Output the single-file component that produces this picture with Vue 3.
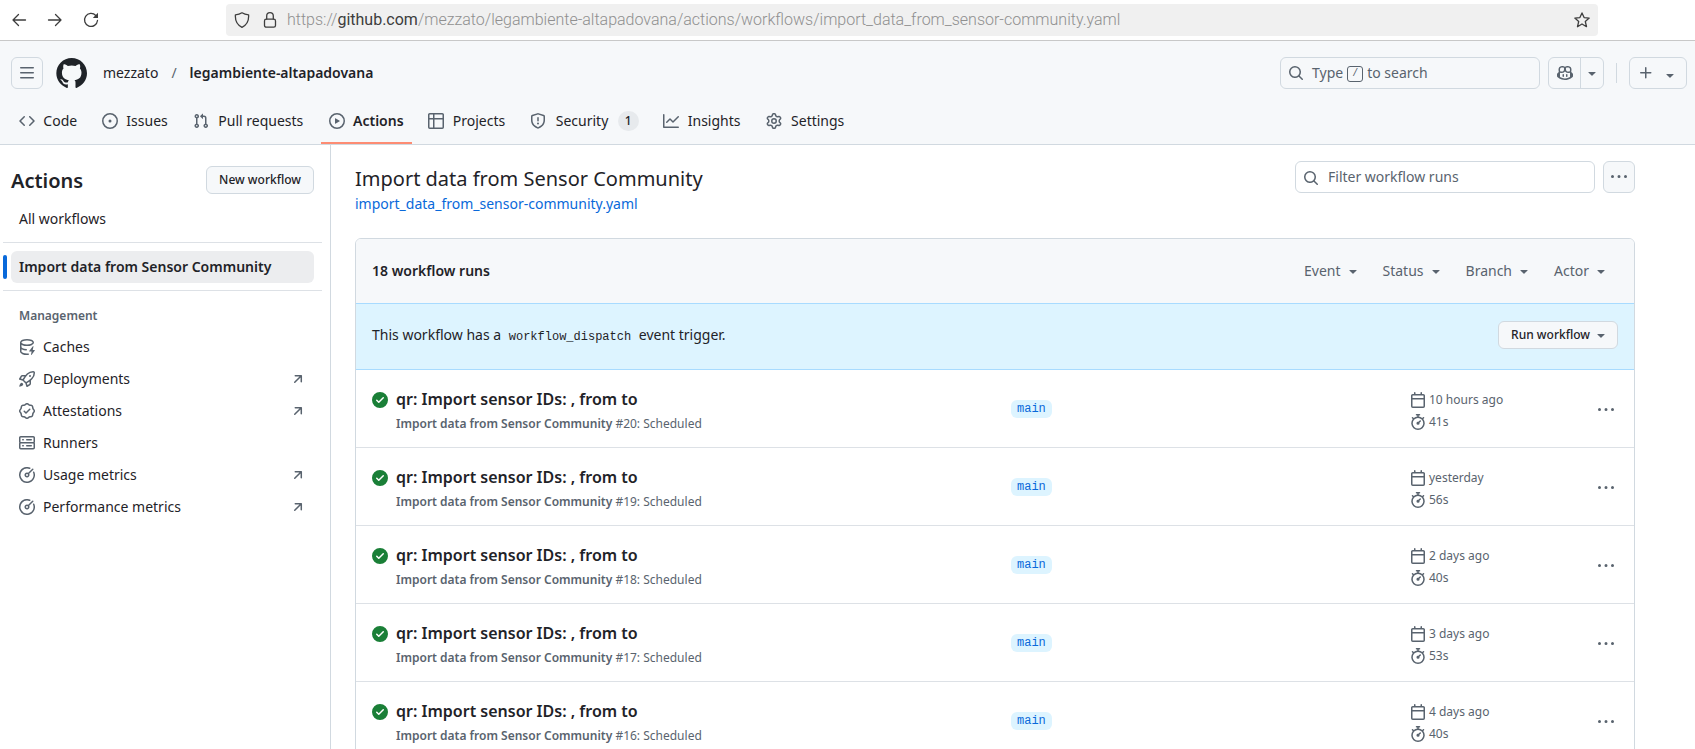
<script setup>
import { h } from 'vue'

const icons = {
  bars: 'M1 2.75A.75.75 0 0 1 1.75 2h12.5a.75.75 0 0 1 0 1.5H1.75A.75.75 0 0 1 1 2.75Zm0 5A.75.75 0 0 1 1.75 7h12.5a.75.75 0 0 1 0 1.5H1.75A.75.75 0 0 1 1 7.75ZM1.75 12h12.5a.75.75 0 0 1 0 1.5H1.75a.75.75 0 0 1 0-1.5Z',
  code: 'm11.28 3.22 4.25 4.25a.75.75 0 0 1 0 1.06l-4.25 4.25a.749.749 0 0 1-1.275-.326.749.749 0 0 1 .215-.734L13.94 8l-3.72-3.72a.749.749 0 0 1 .326-1.275.749.749 0 0 1 .734.215Zm-6.56 0a.751.751 0 0 1 1.042.018.751.751 0 0 1 .018 1.042L2.06 8l3.72 3.72a.749.749 0 0 1-.326 1.275.749.749 0 0 1-.734-.215L.47 8.53a.75.75 0 0 1 0-1.06Z',
  issue: 'M8 9.5a1.5 1.5 0 1 0 0-3 1.5 1.5 0 0 0 0 3ZM8 0a8 8 0 1 1 0 16A8 8 0 0 1 8 0ZM1.5 8a6.5 6.5 0 1 0 13 0 6.5 6.5 0 0 0-13 0Z',
  pull: 'M1.5 3.25a2.25 2.25 0 1 1 3 2.122v5.256a2.251 2.251 0 1 1-1.5 0V5.372A2.25 2.25 0 0 1 1.5 3.25Zm5.677-.177L9.573.677A.25.25 0 0 1 10 .854V2.5h1A2.5 2.5 0 0 1 13.5 5v5.628a2.251 2.251 0 1 1-1.5 0V5a1 1 0 0 0-1-1h-1v1.646a.25.25 0 0 1-.427.177L7.177 3.427a.25.25 0 0 1 0-.354ZM3.75 2.5a.75.75 0 1 0 0 1.5.75.75 0 0 0 0-1.5Zm0 9.5a.75.75 0 1 0 0 1.5.75.75 0 0 0 0-1.5Zm8.25.75a.75.75 0 1 0 1.5 0 .75.75 0 0 0-1.5 0Z',
  play: 'M8 0a8 8 0 1 1 0 16A8 8 0 0 1 8 0ZM1.5 8a6.5 6.5 0 1 0 13 0 6.5 6.5 0 0 0-13 0Zm4.879-2.773 4.264 2.559a.25.25 0 0 1 0 .428l-4.264 2.559A.25.25 0 0 1 6 10.559V5.442a.25.25 0 0 1 .379-.215Z',
  table: 'M0 1.75C0 .784.784 0 1.75 0h12.5C15.216 0 16 .784 16 1.75v12.5A1.75 1.75 0 0 1 14.25 16H1.75A1.75 1.75 0 0 1 0 14.25ZM6.5 6.5v8h7.75a.25.25 0 0 0 .25-.25V6.5Zm8-1.5V1.75a.25.25 0 0 0-.25-.25H6.5V5Zm-13 1.5v7.75c0 .138.112.25.25.25H5v-8ZM5 5V1.5H1.75a.25.25 0 0 0-.25.25V5Z',
  shield: 'M7.467.133a1.748 1.748 0 0 1 1.066 0l5.25 1.68A1.75 1.75 0 0 1 15 3.48V7c0 1.566-.32 3.182-1.303 4.682-.983 1.498-2.585 2.813-5.032 3.855a1.697 1.697 0 0 1-1.33 0c-2.447-1.042-4.049-2.357-5.032-3.855C1.32 10.182 1 8.566 1 7V3.48a1.75 1.75 0 0 1 1.217-1.667Zm.61 1.429a.25.25 0 0 0-.153 0l-5.25 1.68a.25.25 0 0 0-.174.238V7c0 1.358.275 2.666 1.057 3.86.784 1.194 2.121 2.34 4.366 3.297a.196.196 0 0 0 .154 0c2.245-.956 3.582-2.104 4.366-3.298C13.225 9.666 13.5 8.36 13.5 7V3.48a.251.251 0 0 0-.174-.237l-5.25-1.68ZM8.75 4.75v3a.75.75 0 0 1-1.5 0v-3a.75.75 0 0 1 1.5 0ZM9 10.5a1 1 0 1 1-2 0 1 1 0 0 1 2 0Z',
  graph: 'M1.5 1.75V13.5h13.75a.75.75 0 0 1 0 1.5H.75a.75.75 0 0 1-.75-.75V1.75a.75.75 0 0 1 1.5 0Zm14.28 2.53-5.25 5.25a.75.75 0 0 1-1.06 0L7 7.06 4.28 9.78a.751.751 0 0 1-1.042-.018.751.751 0 0 1-.018-1.042l3.25-3.25a.75.75 0 0 1 1.06 0L10 7.94l4.72-4.72a.751.751 0 0 1 1.042.018.751.751 0 0 1 .018 1.042Z',
  gear: 'M8 0a8.2 8.2 0 0 1 .701.031C9.444.095 9.99.645 10.16 1.29l.288 1.107c.018.066.079.158.212.224.231.114.454.243.668.386.123.082.233.09.299.071l1.103-.303c.644-.176 1.392.021 1.82.63.27.385.506.792.704 1.218.315.675.111 1.422-.364 1.891l-.814.806c-.049.048-.098.147-.088.294.016.257.016.515 0 .772-.01.147.038.246.088.294l.814.806c.475.469.679 1.216.364 1.891a7.977 7.977 0 0 1-.704 1.217c-.428.61-1.176.807-1.82.63l-1.102-.302c-.067-.019-.177-.011-.3.071a5.909 5.909 0 0 1-.668.386c-.133.066-.194.158-.211.224l-.29 1.106c-.168.646-.715 1.196-1.458 1.26a8.006 8.006 0 0 1-1.402 0c-.743-.064-1.289-.614-1.458-1.26l-.289-1.106c-.018-.066-.079-.158-.212-.224a5.738 5.738 0 0 1-.668-.386c-.123-.082-.233-.09-.299-.071l-1.103.303c-.644.176-1.392-.021-1.82-.63a8.12 8.12 0 0 1-.704-1.218c-.315-.675-.111-1.422.363-1.891l.815-.806c.05-.048.098-.147.088-.294a6.214 6.214 0 0 1 0-.772c.01-.147-.038-.246-.088-.294l-.815-.806C.635 6.045.431 5.298.746 4.623a7.92 7.92 0 0 1 .704-1.217c.428-.61 1.176-.807 1.82-.63l1.102.302c.067.019.177.011.3-.071.214-.143.437-.272.668-.386.133-.066.194-.158.211-.224l.29-1.106C6.009.645 6.556.095 7.299.03 7.53.01 7.764 0 8 0Zm-.571 1.525c-.036.003-.108.036-.137.146l-.289 1.105c-.147.561-.549.967-.998 1.189-.173.086-.34.183-.5.29-.417.278-.97.423-1.529.27l-1.103-.303c-.109-.03-.175.016-.195.045-.22.312-.412.644-.573.99-.014.031-.021.11.059.19l.815.806c.411.406.562.957.53 1.456a4.709 4.709 0 0 0 0 .582c.032.499-.119 1.05-.53 1.456l-.815.806c-.081.08-.073.159-.059.19.162.346.353.677.573.989.02.03.085.076.195.046l1.102-.303c.56-.153 1.113-.008 1.53.27.161.107.328.204.501.29.447.222.85.629.997 1.189l.289 1.105c.029.109.101.143.137.146a6.6 6.6 0 0 0 1.142 0c.036-.003.108-.036.137-.146l.289-1.105c.147-.561.549-.967.998-1.189.173-.086.34-.183.5-.29.417-.278.97-.423 1.529-.27l1.103.303c.109.029.175-.016.195-.045.22-.313.411-.644.573-.99.014-.031.021-.11-.059-.19l-.815-.806c-.411-.406-.562-.957-.53-1.456a4.709 4.709 0 0 0 0-.582c-.032-.499.119-1.05.53-1.456l.815-.806c.081-.08.073-.159.059-.19a6.464 6.464 0 0 0-.573-.989c-.02-.03-.085-.076-.195-.046l-1.102.303c-.56.153-1.113.008-1.53-.27a4.44 4.44 0 0 0-.501-.29c-.447-.222-.85-.629-.997-1.189l-.289-1.105c-.029-.11-.101-.143-.137-.146a6.6 6.6 0 0 0-1.142 0ZM11 8a3 3 0 1 1-6 0 3 3 0 0 1 6 0ZM9.5 8a1.5 1.5 0 1 0-3.001.001A1.5 1.5 0 0 0 9.5 8Z',
  search: 'M10.68 11.74a6 6 0 0 1-7.922-8.982 6 6 0 0 1 8.982 7.922l3.04 3.04a.749.749 0 0 1-.326 1.275.749.749 0 0 1-.734-.215ZM11.5 7a4.499 4.499 0 1 0-8.997 0A4.499 4.499 0 0 0 11.5 7Z',
  copilot: 'M7.998 15.035c-4.562 0-7.873-2.914-7.998-3.749V9.338c.085-.628.677-1.686 1.588-2.065.013-.07.024-.143.036-.218.029-.183.06-.384.126-.612-.201-.508-.254-1.084-.254-1.656 0-.87.128-1.769.693-2.484.579-.733 1.494-1.124 2.724-1.261 1.206-.134 2.262.034 2.944.765.05.053.096.108.139.165.044-.057.094-.112.143-.165.682-.731 1.738-.899 2.944-.765 1.23.137 2.145.528 2.724 1.261.566.715.693 1.614.693 2.484 0 .572-.053 1.148-.254 1.656.066.228.098.429.126.612.012.076.024.148.037.218.924.385 1.522 1.471 1.591 2.095v1.872c0 .766-3.351 3.795-8.002 3.795Zm0-1.485c2.28 0 4.584-1.11 5.002-1.433V7.862l-.023-.116c-.49.21-1.075.291-1.727.291-1.146 0-2.059-.327-2.71-.991A3.222 3.222 0 0 1 8 6.303a3.24 3.24 0 0 1-.544.743c-.65.664-1.563.991-2.71.991-.652 0-1.236-.081-1.727-.291l-.023.116v4.255c.419.323 2.722 1.433 5.002 1.433ZM6.762 2.83c-.193-.206-.637-.413-1.682-.297-1.019.113-1.479.404-1.713.7-.247.312-.369.789-.369 1.554 0 .793.129 1.171.308 1.371.162.181.519.379 1.442.379.853 0 1.339-.235 1.638-.54.315-.322.527-.827.617-1.553.117-.935-.037-1.395-.241-1.614Zm4.155-.297c-1.044-.116-1.488.091-1.681.297-.204.219-.359.679-.242 1.614.091.726.303 1.231.618 1.553.299.305.784.54 1.638.54.922 0 1.28-.198 1.442-.379.179-.2.308-.578.308-1.371 0-.765-.123-1.242-.37-1.554-.233-.296-.693-.587-1.713-.7ZM6.25 9.037a.75.75 0 0 1 .75.75v1.501a.75.75 0 0 1-1.5 0V9.787a.75.75 0 0 1 .75-.75Zm4.25.75v1.501a.75.75 0 0 1-1.5 0V9.787a.75.75 0 0 1 1.5 0Z',
  caret: 'm4.427 7.427 3.396 3.396a.25.25 0 0 0 .354 0l3.396-3.396A.25.25 0 0 0 11.396 7H4.604a.25.25 0 0 0-.177.427Z',
  plus: 'M7.75 2a.75.75 0 0 1 .75.75V7h4.25a.75.75 0 0 1 0 1.5H8.5v4.25a.75.75 0 0 1-1.5 0V8.5H2.75a.75.75 0 0 1 0-1.5H7V2.75A.75.75 0 0 1 7.75 2Z',
  kebab: 'M8 9a1.5 1.5 0 1 0 0-3 1.5 1.5 0 0 0 0 3ZM1.5 9a1.5 1.5 0 1 0 0-3 1.5 1.5 0 0 0 0 3Zm13 0a1.5 1.5 0 1 0 0-3 1.5 1.5 0 0 0 0 3Z',
  success: 'M8 16A8 8 0 1 1 8 0a8 8 0 0 1 0 16Zm3.78-9.72a.751.751 0 0 0-.018-1.042.751.751 0 0 0-1.042-.018L6.75 9.19 5.28 7.72a.751.751 0 0 0-1.042.018.751.751 0 0 0-.018 1.042l2 2a.75.75 0 0 0 1.06 0Z',
  calendar: 'M4.75 0a.75.75 0 0 1 .75.75V2h5V.75a.75.75 0 0 1 1.5 0V2h1.25c.966 0 1.75.784 1.75 1.75v10.5A1.75 1.75 0 0 1 13.25 16H2.75A1.75 1.75 0 0 1 1 14.25V3.75C1 2.784 1.784 2 2.75 2H4V.75A.75.75 0 0 1 4.75 0ZM2.5 7.5v6.75c0 .138.112.25.25.25h10.5a.25.25 0 0 0 .25-.25V7.5Zm10.75-4H2.75a.25.25 0 0 0-.25.25V6h11V3.75a.25.25 0 0 0-.25-.25Z',
  stopwatch: 'M5.75.75A.75.75 0 0 1 6.5 0h3a.75.75 0 0 1 0 1.5h-.75v1l-.001.041a6.724 6.724 0 0 1 3.464 1.435l.007-.006.75-.75a.749.749 0 0 1 1.275.326.749.749 0 0 1-.215.734l-.75.75-.006.007a6.75 6.75 0 1 1-10.548 0L2.72 5.03l-.75-.75a.751.751 0 0 1 .018-1.042.751.751 0 0 1 1.042-.018l.75.75.007.006A6.72 6.72 0 0 1 7.25 2.541V1.5H6.5a.75.75 0 0 1-.75-.75ZM8 14.5a5.25 5.25 0 1 0-.001-10.501A5.25 5.25 0 0 0 8 14.5Zm.389-6.7 1.33-1.33a.75.75 0 1 1 1.061 1.06L9.45 8.861A1.503 1.503 0 0 1 8 10.75a1.499 1.499 0 1 1 .389-2.95Z',
  cache: 'M2.5 5.724V8c0 .248.238.7 1.169 1.159.874.43 2.144.745 3.62.822a.75.75 0 1 1-.078 1.498c-1.622-.085-3.102-.432-4.204-.975a5.565 5.565 0 0 1-.507-.28V12.5c0 .133.058.318.282.551.227.237.591.483 1.101.707 1.015.447 2.47.742 4.117.742.406 0 .802-.018 1.183-.052a.751.751 0 1 1 .134 1.494C8.89 15.98 8.45 16 8 16c-1.805 0-3.475-.32-4.721-.869-.623-.274-1.173-.619-1.579-1.041-.408-.425-.7-.964-.7-1.59v-9c0-.626.292-1.165.7-1.591.406-.42.956-.766 1.579-1.04C4.525.32 6.195 0 8 0c1.806 0 3.476.32 4.721.869.623.274 1.173.619 1.579 1.041.408.425.7.964.7 1.59 0 .626-.292 1.165-.7 1.591-.406.42-.956.766-1.578 1.04C11.475 6.68 9.805 7 8 7c-1.805 0-3.475-.32-4.721-.869a6.15 6.15 0 0 1-.779-.407Zm0-2.224c0 .133.058.318.282.551.227.237.591.483 1.101.707C4.898 5.205 6.353 5.5 8 5.5c1.646 0 3.101-.295 4.118-.742.508-.224.873-.471 1.1-.708.224-.232.282-.417.282-.55 0-.133-.058-.318-.282-.551-.227-.237-.591-.483-1.101-.707C11.102 1.795 9.647 1.5 8 1.5c-1.646 0-3.101.295-4.118.742-.508.224-.873.471-1.1.708-.224.232-.282.417-.282.55ZM14.49 7.582a.375.375 0 0 0-.66-.313l-3.625 4.625a.375.375 0 0 0 .295.606h2.127l-.619 2.922a.375.375 0 0 0 .666.304l3.125-4.125A.375.375 0 0 0 15.5 11h-1.778l.769-3.418Z',
  rocket: 'M14.064 0h.186C15.216 0 16 .784 16 1.75v.186a8.752 8.752 0 0 1-2.564 6.186l-.458.459c-.314.314-.641.616-.979.904v3.207c0 .608-.315 1.172-.833 1.49l-2.774 1.707a.749.749 0 0 1-1.11-.418l-.954-3.102a1.214 1.214 0 0 1-.145-.125L3.754 9.816a1.218 1.218 0 0 1-.124-.145L.528 8.717a.749.749 0 0 1-.418-1.11l1.71-2.774A1.748 1.748 0 0 1 3.31 4h3.204c.288-.338.59-.665.904-.979l.459-.458A8.749 8.749 0 0 1 14.064 0ZM8.938 3.623h-.002l-.458.458c-.76.76-1.437 1.598-2.02 2.5l-1.5 2.317 2.143 2.143 2.317-1.5c.902-.583 1.74-1.26 2.499-2.02l.459-.458a7.25 7.25 0 0 0 2.123-5.127V1.75a.25.25 0 0 0-.25-.25h-.186a7.249 7.249 0 0 0-5.125 2.123ZM3.56 14.56c-.732.732-2.334 1.045-3.005 1.148a.234.234 0 0 1-.201-.064.234.234 0 0 1-.064-.201c.103-.671.416-2.273 1.15-3.003a1.502 1.502 0 1 1 2.12 2.12Zm6.94-3.935c-.088.06-.177.118-.266.175l-2.35 1.521.548 1.783 1.949-1.2a.25.25 0 0 0 .119-.213ZM3.678 8.116 5.2 5.766c.058-.09.117-.178.176-.266H3.309a.25.25 0 0 0-.213.119l-1.2 1.95ZM12 5a1 1 0 1 1-2 0 1 1 0 0 1 2 0Z',
  verified: 'm9.585.52.929.68c.153.112.331.186.518.215l1.138.175a2.678 2.678 0 0 1 2.24 2.24l.174 1.139c.029.187.103.365.215.518l.68.928a2.677 2.677 0 0 1 0 3.17l-.68.928a1.174 1.174 0 0 0-.215.518l-.175 1.138a2.678 2.678 0 0 1-2.241 2.241l-1.138.175a1.17 1.17 0 0 0-.518.215l-.928.68a2.677 2.677 0 0 1-3.17 0l-.928-.68a1.174 1.174 0 0 0-.518-.215L3.83 14.41a2.678 2.678 0 0 1-2.24-2.24l-.175-1.138a1.17 1.17 0 0 0-.215-.518l-.68-.928a2.677 2.677 0 0 1 0-3.17l.68-.928c.112-.153.186-.331.215-.518l.175-1.14a2.678 2.678 0 0 1 2.24-2.24l1.139-.175c.187-.029.365-.103.518-.215l.928-.68a2.677 2.677 0 0 1 3.17 0ZM7.303 1.728l-.927.68a2.67 2.67 0 0 1-1.18.489l-1.137.174a1.179 1.179 0 0 0-.987.987l-.174 1.136a2.677 2.677 0 0 1-.489 1.18l-.68.928a1.18 1.18 0 0 0 0 1.394l.68.927c.256.348.424.753.489 1.18l.174 1.137c.078.509.478.909.987.987l1.136.174a2.67 2.67 0 0 1 1.18.489l.928.68c.414.305.979.305 1.394 0l.927-.68a2.67 2.67 0 0 1 1.18-.489l1.137-.174a1.18 1.18 0 0 0 .987-.987l.174-1.136a2.67 2.67 0 0 1 .489-1.18l.68-.928a1.176 1.176 0 0 0 0-1.394l-.68-.927a2.686 2.686 0 0 1-.489-1.18l-.174-1.137a1.179 1.179 0 0 0-.987-.987l-1.136-.174a2.677 2.677 0 0 1-1.18-.489l-.928-.68a1.176 1.176 0 0 0-1.394 0ZM11.28 6.78l-3.75 3.75a.75.75 0 0 1-1.06 0L4.72 8.78a.751.751 0 0 1 .018-1.042.751.751 0 0 1 1.042-.018L7 8.94l3.22-3.22a.751.751 0 0 1 1.042.018.751.751 0 0 1 .018 1.042Z',
  server: 'M1.75 1h12.5c.966 0 1.75.784 1.75 1.75v4c0 .372-.116.717-.314 1 .198.283.314.628.314 1v4a1.75 1.75 0 0 1-1.75 1.75H1.75A1.75 1.75 0 0 1 0 12.75v-4c0-.358.109-.707.314-1a1.739 1.739 0 0 1-.314-1v-4C0 1.784.784 1 1.75 1ZM1.5 2.75v4c0 .138.112.25.25.25h12.5a.25.25 0 0 0 .25-.25v-4a.25.25 0 0 0-.25-.25H1.75a.25.25 0 0 0-.25.25Zm.25 5.75a.25.25 0 0 0-.25.25v4c0 .138.112.25.25.25h12.5a.25.25 0 0 0 .25-.25v-4a.25.25 0 0 0-.25-.25ZM7 4.75A.75.75 0 0 1 7.75 4h4.5a.75.75 0 0 1 0 1.5h-4.5A.75.75 0 0 1 7 4.75ZM7.75 10h4.5a.75.75 0 0 1 0 1.5h-4.5a.75.75 0 0 1 0-1.5ZM3 4.75A.75.75 0 0 1 3.75 4h.5a.75.75 0 0 1 0 1.5h-.5A.75.75 0 0 1 3 4.75ZM3.75 10h.5a.75.75 0 0 1 0 1.5h-.5a.75.75 0 0 1 0-1.5Z',
  meter: 'M8 1.5a6.5 6.5 0 1 0 6.016 4.035.75.75 0 0 1 1.388-.57 8 8 0 1 1-4.37-4.37.75.75 0 0 1-.569 1.389A6.473 6.473 0 0 0 8 1.5Zm6.28.22a.75.75 0 0 1 0 1.06l-4.063 4.064a2.5 2.5 0 1 1-1.06-1.06L13.22 1.72a.75.75 0 0 1 1.06 0ZM7 8a1 1 0 1 0 2 0 1 1 0 0 0-2 0Z',
  external: 'M4.53 4.75A.75.75 0 0 1 5.28 4h6.01a.75.75 0 0 1 .75.75v6.01a.75.75 0 0 1-1.5 0v-4.2l-5.26 5.261a.749.749 0 0 1-1.275-.326.749.749 0 0 1 .215-.734L9.48 5.5h-4.2a.75.75 0 0 1-.75-.75Z',
}

const Icon = (props) =>
  h('svg', { width: 16, height: 16, viewBox: '0 0 16 16', fill: 'currentColor', 'aria-hidden': 'true' }, [
    h('path', { d: icons[props.name] }),
  ])
Icon.props = ['name']

const tabs = [
  { icon: 'code', label: 'Code' },
  { icon: 'issue', label: 'Issues' },
  { icon: 'pull', label: 'Pull requests' },
  { icon: 'play', label: 'Actions', active: true },
  { icon: 'table', label: 'Projects' },
  { icon: 'shield', label: 'Security', count: 1 },
  { icon: 'graph', label: 'Insights' },
  { icon: 'gear', label: 'Settings' },
]

const management = [
  { icon: 'cache', label: 'Caches' },
  { icon: 'rocket', label: 'Deployments', external: true },
  { icon: 'verified', label: 'Attestations', external: true },
  { icon: 'server', label: 'Runners' },
  { icon: 'meter', label: 'Usage metrics', external: true },
  { icon: 'meter', label: 'Performance metrics', external: true },
]

const filters = ['Event', 'Status', 'Branch', 'Actor']

const runs = [
  { number: 20, when: '10 hours ago', duration: '41s' },
  { number: 19, when: 'yesterday', duration: '56s' },
  { number: 18, when: '2 days ago', duration: '40s' },
  { number: 17, when: '3 days ago', duration: '53s' },
  { number: 16, when: '4 days ago', duration: '40s' },
]
</script>

<template>
  <div class="window">
    <div class="browser-bar">
      <div class="browser-nav">
        <button type="button" aria-label="Back">
          <svg width="16" height="16" viewBox="0 0 16 16" class="line"><path d="M14.5 8H2M7.5 2.5 2 8l5.5 5.5" /></svg>
        </button>
        <button type="button" aria-label="Forward">
          <svg width="16" height="16" viewBox="0 0 16 16" class="line"><path d="M1.5 8H14M8.500 2.500 14 8l-5.500 5.500" /></svg>
        </button>
        <button type="button" aria-label="Reload">
          <svg width="16" height="16" viewBox="0 0 16 16" class="line"><path d="M12.800 3.500A6.500 6.500 0 1 0 14.500 8.500" /><path class="solid" d="M15 .8V6H9.800Z" /></svg>
        </button>
      </div>
      <div class="address">
        <svg width="16" height="16" viewBox="0 0 16 16" class="line"><path d="M8 .8C6.200 2 4 2.700 1.400 2.900 1 8.500 3 13 8 15.300c5-2.300 7-6.800 6.600-12.400C12 2.700 9.800 2 8 .8Z" /></svg>
        <svg width="16" height="16" viewBox="0 0 16 16" class="line"><rect x="2.500" y="7.200" width="11" height="8" rx="1.800" /><path d="M4.700 7V4a3.300 3.300 0 0 1 6.600 0v3" /></svg>
        <div class="url" role="textbox" aria-label="Address" tabindex="0">https://<b>github.com</b>/mezzato/legambiente-altapadovana/actions/workflows/import_data_from_sensor-community.yaml</div>
        <button type="button" class="star" aria-label="Bookmark">
          <svg width="16" height="16" viewBox="0 0 16 16" class="line"><path d="m8 .9 2.100 4.700 5.100.5-3.900 3.400 1.200 5.200L8 12l-4.500 2.700 1.200-5.200L.8 6.100l5.100-.5Z" /></svg>
        </button>
      </div>
    </div>

    <header class="site-header">
      <div class="top-row">
        <button type="button" class="box-btn square" aria-label="Open menu"><Icon name="bars" /></button>
        <a href="#" class="logo" aria-label="Homepage">
          <svg width="32" height="32" viewBox="0 0 24 24" fill="currentColor"><path d="M12.5.75C6.146.75 1 5.896 1 12.250c0 5.089 3.292 9.387 7.863 10.910.575.101.79-.244.79-.546 0-.273-.014-1.178-.014-2.142-2.889.532-3.636-.704-3.866-1.350-.13-.331-.69-1.352-1.180-1.625-.402-.216-.977-.748-.014-.762.906-.014 1.553.834 1.769 1.179 1.035 1.740 2.688 1.250 3.349.948.1-.747.402-1.250.733-1.538-2.559-.287-5.232-1.279-5.232-5.678 0-1.250.445-2.285 1.178-3.090-.115-.288-.517-1.467.115-3.048 0 0 .963-.302 3.163 1.179.92-.259 1.897-.388 2.875-.388.977 0 1.955.13 2.875.388 2.200-1.495 3.162-1.179 3.162-1.179.633 1.581.23 2.760.115 3.048.733.805 1.179 1.825 1.179 3.090 0 4.413-2.688 5.390-5.247 5.678.417.36.776 1.050.776 2.128 0 1.538-.014 2.774-.014 3.162 0 .302.216.662.79.547C20.709 21.637 24 17.324 24 12.250 24 5.896 18.854.75 12.500.75Z" /></svg>
        </a>
        <nav class="crumbs" aria-label="Breadcrumb">
          <a href="#">mezzato</a><span class="slash">/</span><a href="#" class="strong">legambiente-altapadovana</a>
        </nav>
        <button type="button" class="box-btn site-search">
          <Icon name="search" /><span>Type <kbd>/</kbd> to search</span>
        </button>
        <div class="split">
          <button type="button" aria-label="Chat with Copilot"><Icon name="copilot" /></button>
          <button type="button" class="narrow" aria-label="Open Copilot menu"><Icon name="caret" /></button>
        </div>
        <span class="rule"></span>
        <button type="button" class="box-btn create" aria-label="Create new"><Icon name="plus" /><Icon name="caret" class="low" /></button>
      </div>
      <nav class="tabs" aria-label="Repository">
        <a v-for="t in tabs" :key="t.label" href="#" :class="{ active: t.active }">
          <Icon :name="t.icon" /><span class="tab-label" :data-label="t.label">{{ t.label }}</span><span v-if="t.count" class="count">{{ t.count }}</span>
        </a>
      </nav>
    </header>

    <div class="body">
      <aside class="sidebar">
        <div class="side-head">
          <h2>Actions</h2>
          <button type="button" class="small-btn">New workflow</button>
        </div>
        <a href="#" class="side-item">All workflows</a>
        <hr>
        <a href="#" class="side-item selected">Import data from Sensor Community</a>
        <hr>
        <h3>Management</h3>
        <a v-for="m in management" :key="m.label" href="#" class="side-item">
          <Icon :name="m.icon" /><span>{{ m.label }}</span><Icon v-if="m.external" name="external" class="end" />
        </a>
      </aside>

      <main class="content">
        <div class="title-row">
          <div class="titles">
            <h1>Import data from Sensor Community</h1>
            <a href="#">import_data_from_sensor-community.yaml</a>
          </div>
          <label class="filter">
            <Icon name="search" />
            <input type="search" placeholder="Filter workflow runs" aria-label="Filter workflow runs">
          </label>
          <button type="button" class="box-btn square tinted" aria-label="Workflow options"><Icon name="kebab" /></button>
        </div>

        <section class="runs">
          <div class="runs-head">
            <strong>18 workflow runs</strong>
            <div class="filters">
              <button v-for="f in filters" :key="f" type="button">{{ f }}<Icon name="caret" /></button>
            </div>
          </div>
          <div class="dispatch">
            <p>This workflow has a <code>workflow_dispatch</code> event trigger.</p>
            <button type="button" class="small-btn">Run workflow<Icon name="caret" /></button>
          </div>
          <ul>
            <li v-for="r in runs" :key="r.number">
              <div class="run">
                <Icon name="success" class="ok" />
                <div>
                  <a href="#" class="run-title">qr: Import sensor IDs: , from to</a>
                  <p><b>Import data from Sensor Community</b> #{{ r.number }}: Scheduled</p>
                </div>
              </div>
              <div class="branch"><a href="#">main</a></div>
              <div class="meta">
                <span><Icon name="calendar" />{{ r.when }}</span>
                <span><Icon name="stopwatch" />{{ r.duration }}</span>
              </div>
              <button type="button" class="more" aria-label="Run options"><Icon name="kebab" /></button>
            </li>
          </ul>
        </section>
      </main>
    </div>
  </div>
</template>

<style>
body {
  margin: 0;
}
</style>

<style scoped>
* {
  box-sizing: border-box;
}
.window {
  height: 100vh;
  overflow: hidden;
  display: flex;
  flex-direction: column;
  background: #fff;
  color: #1f2328;
  font: 14px/20px "Noto Sans", sans-serif;
}
button {
  font: inherit;
  color: inherit;
  background: none;
  border: 0;
  padding: 0;
  display: flex;
  align-items: center;
  justify-content: center;
}
a {
  color: inherit;
  text-decoration: none;
}
svg {
  flex: none;
  display: block;
}
h1, h2, h3, p, ul {
  margin: 0;
  padding: 0;
}
.line {
  fill: none;
  stroke: currentColor;
  stroke-width: 1.3;
  stroke-linecap: round;
  stroke-linejoin: round;
}
.solid {
  fill: currentColor;
  stroke: none;
}

.browser-bar {
  flex: none;
  display: flex;
  align-items: center;
  padding: 4px 97px 4px 11px;
  border-bottom: 1px solid #c8c8c8;
  color: #3d3d3d;
}
.browser-nav {
  display: flex;
  gap: 20px;
  width: 215px;
}
.browser-nav button {
  width: 16px;
  height: 32px;
}
.address {
  flex: 1;
  min-width: 0;
  height: 32px;
  display: flex;
  align-items: center;
  gap: 12px;
  padding: 0 8px;
  border-radius: 4px;
  background: #f0f0f0;
}
.url {
  flex: 1;
  min-width: 0;
  margin-left: -3px;
  overflow: hidden;
  white-space: nowrap;
  font: 300 16px/24px Roboto, sans-serif;
  color: #8f8f8f;
}
.url b {
  font-weight: 400;
  color: #3d3d3d;
}

.site-header {
  flex: none;
  background: #f6f8fa;
  border-bottom: 1px solid #d1d9e0;
  padding-top: 16px;
  color: #1f2328;
}
.top-row {
  display: flex;
  align-items: center;
  padding: 0 8px 0 11px;
}
.box-btn {
  height: 32px;
  border: 1px solid #d1d9e0;
  border-radius: 6px;
  color: #59636e;
}
.square {
  width: 32px;
}
.tinted {
  background: #f6f8fa;
}
.logo {
  margin: 0 16px 0 12px;
}
.crumbs {
  flex: 1;
  display: flex;
  gap: 13px;
}
.slash {
  color: #59636e;
}
.strong {
  font-weight: 600;
}
.site-search {
  width: 260px;
  justify-content: flex-start;
  gap: 8px;
  padding: 0 7px;
}
.site-search span {
  display: flex;
  align-items: center;
  gap: 4px;
}
kbd {
  width: 16px;
  height: 16px;
  margin-top: 2px;
  border: 1px solid #59636e;
  border-radius: 3px;
  font: 10px/14px "Liberation Mono", monospace;
  text-align: center;
}
.split {
  display: flex;
  height: 32px;
  margin-left: 8px;
  border: 1px solid #d1d9e0;
  border-radius: 6px;
  color: #59636e;
}
.split button {
  width: 31px;
}
.split .narrow {
  width: 23px;
  border-left: 1px solid #d1d9e0;
}
.rule {
  width: 1px;
  height: 20px;
  margin: 0 12px;
  background: #d1d9e0;
}
.create {
  width: 58px;
  gap: 8px;
}
.low {
  margin-top: 4px;
}
.tabs {
  display: flex;
  gap: 8px;
  margin-top: 8px;
  padding: 0 11px;
}
.tabs a {
  height: 47px;
  display: flex;
  align-items: center;
  gap: 8px;
  padding: 2px 8px 0;
  border-bottom: 2px solid transparent;
}
.tabs a.active {
  font-weight: 600;
  border-color: #fd8c73;
}
.tabs svg {
  color: #59636e;
}
/* Reserves the bold width so tabs do not shift when selected. */
.tab-label {
  text-align: center;
}
.tab-label::before {
  content: attr(data-label);
  display: block;
  height: 0;
  font-weight: 600;
  visibility: hidden;
}
.count {
  min-width: 20px;
  padding: 0 7px;
  border-radius: 10px;
  background: #e7eaed;
  font: 500 12px/20px "Noto Sans", sans-serif;
  text-align: center;
}

.body {
  flex: 1;
  display: flex;
  align-items: stretch;
}
.sidebar {
  flex: none;
  width: 331px;
  padding: 21px 16px 0 11px;
  border-right: 1px solid #d1d9e0;
}
.side-head {
  display: flex;
  align-items: flex-start;
  justify-content: space-between;
  margin-bottom: 7px;
}
h2 {
  font-size: 20px;
  line-height: 30px;
  font-weight: 600;
}
.small-btn {
  height: 28px;
  padding: 0 12px;
  border: 1px solid #d1d9e0;
  border-radius: 6px;
  background: #f6f8fa;
  font-size: 12px;
  font-weight: 500;
}
.side-item {
  position: relative;
  display: flex;
  align-items: center;
  gap: 8px;
  height: 32px;
  padding: 0 8px;
  border-radius: 6px;
}
.side-item svg {
  color: #59636e;
}
.side-item .end {
  margin-left: auto;
}
.side-item.selected {
  font-weight: 600;
  background: #ecedef;
}
.side-item.selected::before {
  content: "";
  position: absolute;
  left: -8px;
  top: 4px;
  width: 4px;
  height: 24px;
  border-radius: 6px;
  background: #0969da;
}
hr {
  height: 1px;
  border: 0;
  margin: 7px -8px 8px;
  background: #dde1e6;
}
h3 {
  padding: 8px 8px 6px;
  font-size: 12px;
  line-height: 18px;
  font-weight: 600;
  color: #59636e;
}

.content {
  flex: 1;
  min-width: 0;
  padding: 16px 60px 0 24px;
}
.title-row {
  display: flex;
  align-items: flex-start;
  gap: 8px;
  margin-bottom: 24px;
}
.titles {
  flex: 1;
  padding-top: 3px;
}
h1 {
  font-size: 20px;
  line-height: 30px;
  font-weight: 400;
}
.titles a {
  display: block;
  color: #0969da;
}
.filter {
  width: 300px;
  height: 32px;
  display: flex;
  align-items: center;
  gap: 9px;
  padding: 0 7px;
  border: 1px solid #d1d9e0;
  border-radius: 6px;
  color: #59636e;
}
.filter svg {
  margin-top: 2px;
}
.filter input {
  flex: 1;
  min-width: 0;
  border: 0;
  outline: 0;
  padding: 0;
  font: inherit;
  background: none;
}
.filter input::placeholder {
  color: #59636e;
}
.runs {
  border: 1px solid #d1d9e0;
  border-radius: 6px;
  overflow: hidden;
}
.runs-head {
  display: flex;
  align-items: center;
  justify-content: space-between;
  height: 64px;
  padding: 0 25px 0 16px;
  background: #f6f8fa;
}
.runs-head strong {
  font-weight: 600;
}
.filters {
  display: flex;
  gap: 22px;
  color: #59636e;
}
.filters button {
  gap: 4px;
}
.dispatch {
  display: flex;
  align-items: center;
  justify-content: space-between;
  height: 67px;
  padding: 0 16px 3px;
  background: #ddf4ff;
  border: solid #a8dbff;
  border-width: 1px 0;
}
.dispatch .small-btn {
  gap: 3px;
  padding-right: 8px;
}
.dispatch svg {
  color: #59636e;
}
code {
  padding: 0 4px;
  font: 12px "Liberation Mono", monospace;
}
ul {
  list-style: none;
}
li {
  display: grid;
  grid-template-columns: 639px 1fr 188px 16px;
  align-items: start;
  height: 78px;
  padding: 17px 20px 0 16px;
  border-bottom: 1px solid #dde1e6;
}
.run {
  display: flex;
  align-items: flex-start;
  gap: 8px;
}
.ok {
  color: #1a7f37;
  margin-top: 5px;
}
.run-title {
  display: block;
  font-size: 16px;
  line-height: 24px;
  font-weight: 600;
}
.run p {
  margin-top: 4px;
  font-size: 12px;
  line-height: 18px;
  color: #59636e;
}
.run b {
  font-weight: 600;
}
.branch {
  display: flex;
  margin-top: 13px;
}
.branch a {
  padding: 0 6px;
  border-radius: 6px;
  background: #ddf4ff;
  color: #0969da;
  font: 12px/18px "Liberation Mono", monospace;
}
.meta {
  display: grid;
  gap: 6px;
  margin-top: 5px;
  font-size: 12px;
  line-height: 16px;
  color: #59636e;
}
.meta span {
  display: flex;
  align-items: center;
  gap: 3px;
}
.more {
  margin-top: 15px;
  color: #59636e;
}
</style>
